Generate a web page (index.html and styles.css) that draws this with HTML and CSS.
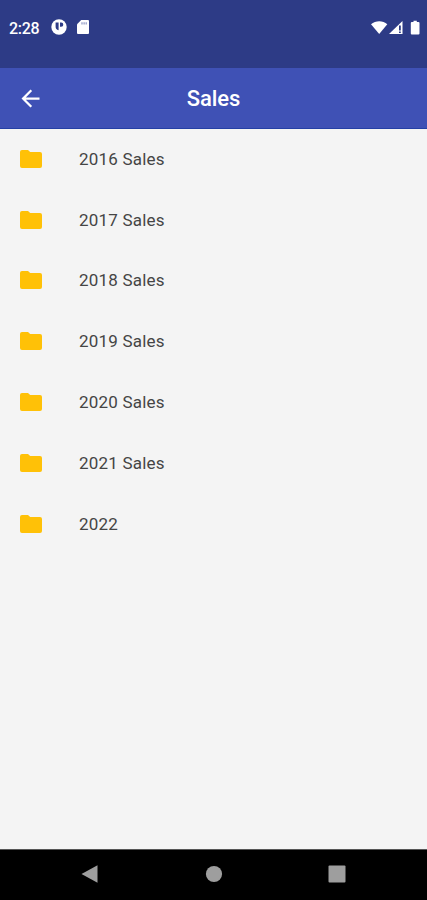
FILE: index.html
```html
<!DOCTYPE html>
<html lang="en">
<head>
<meta charset="utf-8">
<title>Sales</title>
<link rel="stylesheet" href="styles.css">
</head>
<body>
<div class="status">
  <span class="time">2:28</span>
  <svg class="app" viewBox="0 0 16 16"><circle cx="8" cy="8" r="7.7" fill="#fff"/><path d="M4.6 3.6h3v7.6a3.4 3.4 0 0 1-3-3.4zM9 3.6h1.2a2 2 0 0 1 0 4.2H9z" fill="#2d3b86"/></svg>
  <svg class="sd" viewBox="0 0 12 14"><path d="M4.2 0H11a1 1 0 0 1 1 1v12a1 1 0 0 1-1 1H1a1 1 0 0 1-1-1V4.2z" fill="#fff"/><path d="M4.4 2.2h1.2v2.4H4.4zm2.1 0h1.2v2.4H6.5zm2.1 0h1.2v2.4H8.6z" fill="#8d96c2"/></svg>
  <svg class="signals" viewBox="0 0 49 16"><path d="M0 4.300C4.600.2 12 .2 16.300 4.300L8.200 14z" fill="#fff"/><path d="M31.500 1v13H18z" fill="#fff"/><path d="M28 5.500h1.800v5H28zM28 11.500h1.800v1.500H28z" fill="#2d3b86"/><path d="M40.800 2h1.700V.8h3.300V2h1.700q1 0 1 1v10.500q0 1-1 1h-6.700q-1 0-1-1V3q0-1 1-1z" fill="#fff"/></svg>
</div>
<header class="bar">
  <svg class="back" viewBox="0 0 24 24"><path d="M20 11H7.830l5.590-5.590L12 4l-8 8 8 8 1.410-1.410L7.830 13H20z" fill="#fff"/></svg>
  <h1 class="title">Sales</h1>
</header>
<main class="list">
  <div class="row"><svg class="folder" viewBox="0 0 22 18"><path d="M8 0H2Q0 0 0 2v14q0 2 2 2h18q2 0 2-2V4q0-2-2-2H10.200z"/></svg><span>2016 Sales</span></div>
  <div class="row"><svg class="folder" viewBox="0 0 22 18"><path d="M8 0H2Q0 0 0 2v14q0 2 2 2h18q2 0 2-2V4q0-2-2-2H10.200z"/></svg><span>2017 Sales</span></div>
  <div class="row"><svg class="folder" viewBox="0 0 22 18"><path d="M8 0H2Q0 0 0 2v14q0 2 2 2h18q2 0 2-2V4q0-2-2-2H10.200z"/></svg><span>2018 Sales</span></div>
  <div class="row"><svg class="folder" viewBox="0 0 22 18"><path d="M8 0H2Q0 0 0 2v14q0 2 2 2h18q2 0 2-2V4q0-2-2-2H10.200z"/></svg><span>2019 Sales</span></div>
  <div class="row"><svg class="folder" viewBox="0 0 22 18"><path d="M8 0H2Q0 0 0 2v14q0 2 2 2h18q2 0 2-2V4q0-2-2-2H10.200z"/></svg><span>2020 Sales</span></div>
  <div class="row"><svg class="folder" viewBox="0 0 22 18"><path d="M8 0H2Q0 0 0 2v14q0 2 2 2h18q2 0 2-2V4q0-2-2-2H10.200z"/></svg><span>2021 Sales</span></div>
  <div class="row"><svg class="folder" viewBox="0 0 22 18"><path d="M8 0H2Q0 0 0 2v14q0 2 2 2h18q2 0 2-2V4q0-2-2-2H10.200z"/></svg><span>2022</span></div>
</main>
<nav class="nav">
  <svg viewBox="0 0 18 18"><path d="M.5 9 16.500.300v17.400z"/></svg>
  <svg viewBox="0 0 18 18"><circle cx="9" cy="9" r="8.100"/></svg>
  <svg viewBox="0 0 18 18"><rect x=".5" y=".5" width="17" height="17" rx="1"/></svg>
</nav>
</body>
</html>
```
FILE: styles.css
```css
* { box-sizing: border-box; }
body {
  margin: 0;
  width: 427px;
  height: 900px;
  display: flex;
  flex-direction: column;
  overflow: hidden;
  background: #f4f4f4;
  font-family: Roboto, "Liberation Sans", sans-serif;
}
svg { display: block; flex: none; }
.status {
  height: 67.5px;
  flex: none;
  display: flex;
  align-items: flex-start;
  padding: 18px 7px 0 9px;
  background: #2d3b86;
}
.time {
  width: 42px;
  padding-top: 1px;
  color: #fff;
  font-size: 16px;
  font-weight: 500;
  line-height: 20px;
  letter-spacing: -.3px;
}
.app { width: 16px; height: 16px; margin-top: 1px; }
.sd { width: 12px; height: 14px; margin: 2px 0 0 10px; }
.signals { width: 49px; height: 16px; margin: 2px 0 0 auto; }
.bar {
  height: 61px;
  flex: none;
  display: grid;
  grid-template-columns: 27px 1fr 27px;
  align-items: center;
  padding: 0 17.5px;
  background: #3f51b5;
  border-bottom: 1px solid #2440a5;
}
.back { width: 27px; height: 27px; margin: 1px 0 0 -.5px; }
.title {
  margin: 3px 0 0;
  text-align: center;
  color: #fff;
  font-size: 22px;
  font-weight: 500;
  line-height: 28px;
  letter-spacing: -.1px;
}
.list { flex: 1; }
.row {
  height: 60.8px;
  display: flex;
  align-items: center;
  gap: 37px;
  padding-left: 20px;
  color: #454545;
  font-size: 17px;
  letter-spacing: .2px;
}
.folder { width: 22px; height: 18px; fill: #ffc107; }
.nav {
  height: 51.5px;
  flex: none;
  display: flex;
  justify-content: space-between;
  align-items: center;
  padding: 0 81px 1px;
  background: #000;
  border-top: 1px solid #555;
}
.nav svg { width: 18px; height: 18px; fill: #9e9e9e; }
```
